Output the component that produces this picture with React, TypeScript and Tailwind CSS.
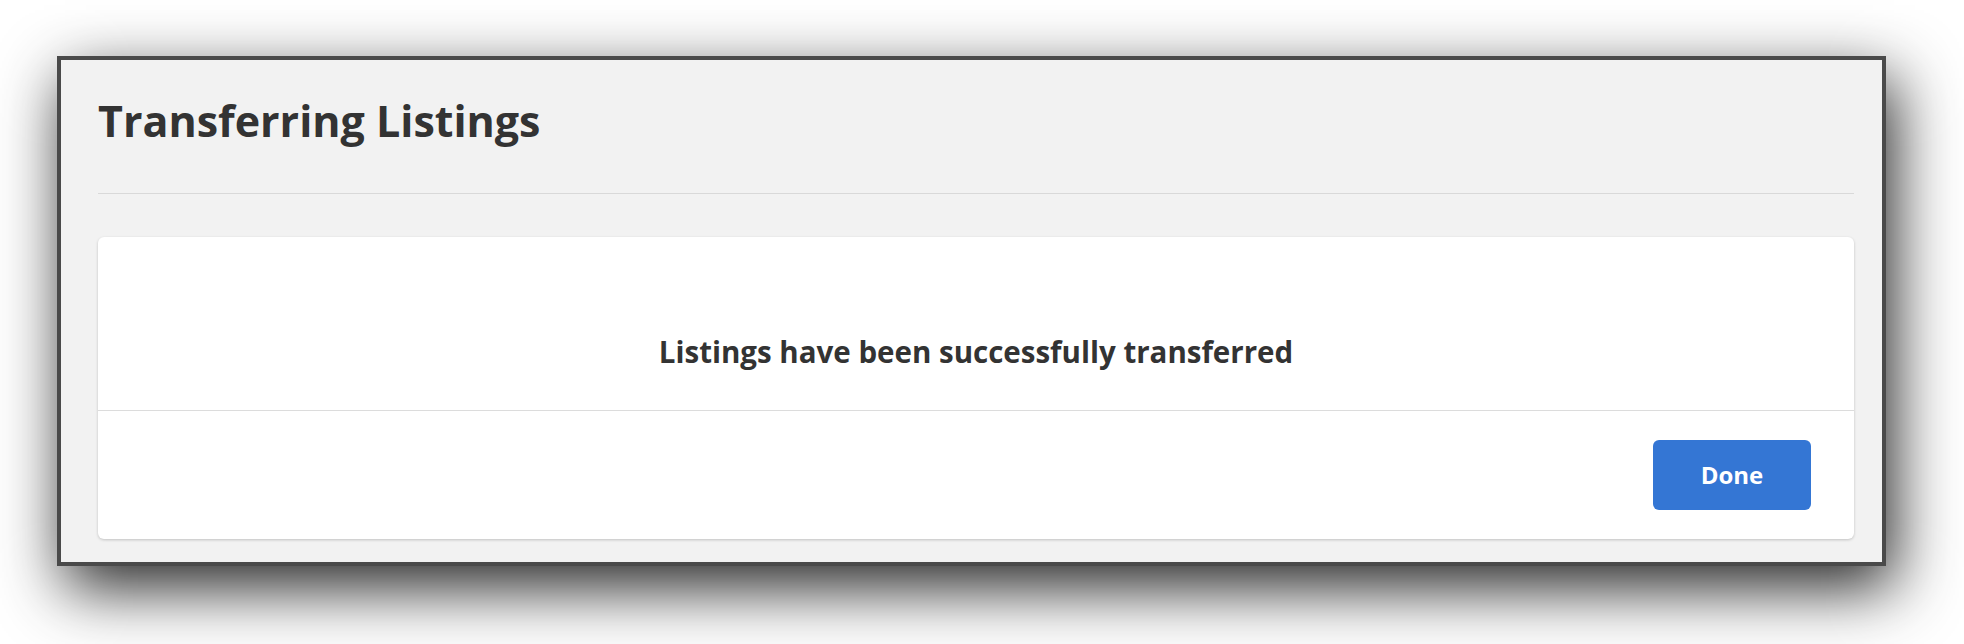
export default function App() {
  return (
    <div className="min-h-[644px] bg-white pl-[57px] pt-[56px] font-['Open_Sans',sans-serif]">
      <div className="w-[1829px] border-4 border-[#4a4a4a] bg-[#f2f2f2] pl-[37px] pr-[28px] pb-[23px] shadow-[8px_22px_60px_rgba(0,0,0,0.85)]">
        <div className="border-b border-[#d9d9d9] pt-[36px] pb-[47px]">
          <h1 className="text-[43px] font-bold leading-[50px] text-[#333333]">Transferring Listings</h1>
        </div>

        <div className="mt-[43px] rounded-md bg-white shadow-[0_1px_3px_rgba(0,0,0,0.2)]">
          <div className="pt-[95px] pb-[38px] text-center">
            <p className="text-[29.5px] font-bold leading-[40px] text-[#333333]">
              Listings have been successfully transferred
            </p>
          </div>
          <div className="flex justify-end border-t border-[#dcdcdc] pt-[29px] pb-[29px] pr-[43px]">
            <button
              type="button"
              className="h-[70px] w-[158px] rounded-md bg-[#3476d4] text-[24px] font-bold text-white"
            >
              Done
            </button>
          </div>
        </div>
      </div>
    </div>
  );
}
